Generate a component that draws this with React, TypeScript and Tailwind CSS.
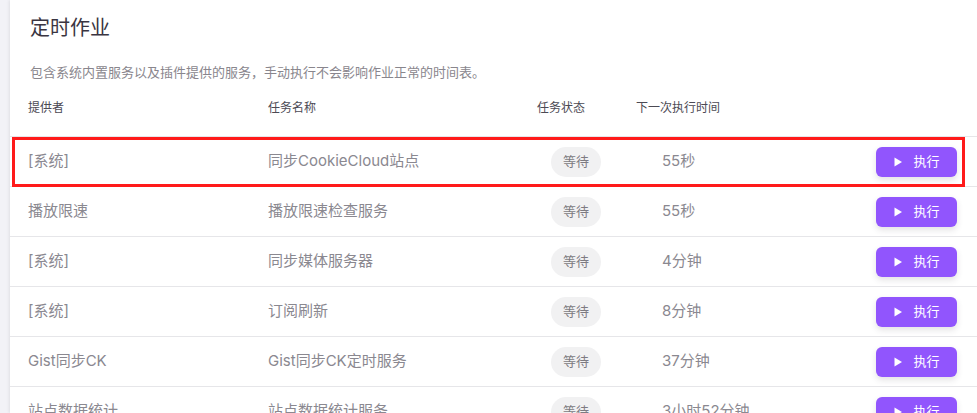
import React from 'react';

interface Job {
  provider: string;
  name: string;
  status: string;
  next: string;
}

const JOBS: Job[] = [
  { provider: '[系统]', name: '同步CookieCloud站点', status: '等待', next: '55秒' },
  { provider: '播放限速', name: '播放限速检查服务', status: '等待', next: '55秒' },
  { provider: '[系统]', name: '同步媒体服务器', status: '等待', next: '4分钟' },
  { provider: '[系统]', name: '订阅刷新', status: '等待', next: '8分钟' },
  { provider: 'Gist同步CK', name: 'Gist同步CK定时服务', status: '等待', next: '37分钟' },
  { provider: '站点数据统计', name: '站点数据统计服务', status: '等待', next: '3小时52分钟' },
];

const font = { fontFamily: 'Inter, "Noto Sans CJK SC", sans-serif' };

const PlayIcon = () => (
  <svg width="10" height="10" viewBox="0 0 10 10" className="shrink-0">
    <path d="M1.5 0.5 L9 5 L1.5 9.5 Z" fill="white" />
  </svg>
);

export default function App() {
  return (
    <div className="h-[413px] w-[977px] overflow-hidden bg-[#f2f2f7] pl-[10px]" style={font}>
      <div className="h-full bg-white shadow-[-1px_0_3px_rgba(0,0,0,0.08)]">
        <div className="pl-[20px] pt-[14px]">
          <h1 className="text-[20px] leading-[28px] font-normal text-[#3a3541]">定时作业</h1>
          <p className="mt-[20px] text-[13px] leading-[20px] text-[#89868d]">
            包含系统内置服务以及插件提供的服务，手动执行不会影响作业正常的时间表。
          </p>
        </div>

        <div className="flex border-b border-[#e6e6e9] pb-[20px] pl-[18px] pt-[18px] text-[12px] leading-[16px] text-[#4c4a54]">
          <div className="w-[240px]">提供者</div>
          <div className="w-[269px]">任务名称</div>
          <div className="w-[99px]">任务状态</div>
          <div>下一次执行时间</div>
        </div>

        {JOBS.map((job, i) => (
          <div
            key={i}
            className="relative flex h-[50px] items-center border-b border-[#e6e6e9] pl-[18px] pr-[20px] text-[15px] text-[#8a8890]"
          >
            <div className="w-[240px]">{job.provider}</div>
            <div className="w-[269px]">{job.name}</div>
            <div className="w-[99px] pl-[14px]">
              <span className="inline-flex h-[30px] w-[50px] items-center justify-center rounded-full bg-[#f1f1f2] text-[13px] text-[#7d7b82]">
                {job.status}
              </span>
            </div>
            <div className="pl-[26px]">{job.next}</div>
            <button className="ml-auto flex h-[30px] w-[81px] items-center justify-center gap-[10px] rounded-[6px] bg-[#9155fd] text-[13px] text-white shadow-[0_3px_6px_rgba(58,53,65,0.14)]">
              <PlayIcon />
              执行
            </button>
            {i === 0 && (
              <span className="pointer-events-none absolute -bottom-[1px] left-[2px] right-[12px] top-[0px] border-[3px] border-[#ff1a1a]" />
            )}
          </div>
        ))}
      </div>
    </div>
  );
}
